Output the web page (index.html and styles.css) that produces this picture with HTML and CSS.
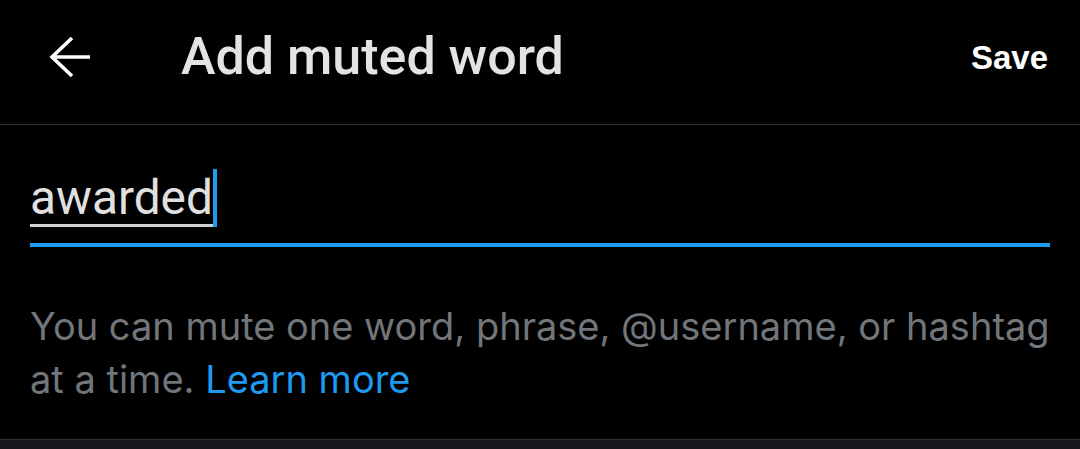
FILE: index.html
```html
<!DOCTYPE html>
<html>
<head>
<meta charset="utf-8">
<link rel="stylesheet" href="styles.css">
</head>
<body>
<div class="screen">
  <header class="topbar">
    <svg class="back" viewBox="0 0 48 48" width="48" height="48" aria-hidden="true">
      <path d="M28 5 L8 24 L28 43 M8 24 H46" fill="none" stroke="#ffffff" stroke-width="3.6" stroke-linecap="butt" stroke-linejoin="miter"/>
    </svg>
    <h1 class="title">Add muted word</h1>
    <span class="save">Save</span>
  </header>
  <section class="field">
    <div class="input-row">
      <span class="typed">awarded</span><span class="caret"></span>
    </div>
    <div class="focus-line"></div>
  </section>
  <p class="help">You can mute one word, phrase, @username, or hashtag at a time. <span class="link">Learn more</span></p>
  <div class="spacer"></div>
  <div class="bottom-band"></div>
</div>
</body>
</html>
```
FILE: styles.css
```css
html, body {
  margin: 0;
  padding: 0;
  background: #000000;
}
.screen {
  width: 1080px;
  height: 449px;
  overflow: hidden;
  display: flex;
  flex-direction: column;
  background: #000000;
}
.topbar {
  flex: none;
  display: flex;
  align-items: center;
  padding: 0 32px 10px 44px;
  box-sizing: border-box;
  border-bottom: 1px solid #2f3336;
  height: 125px;
}
.back {
  flex: none;
  display: block;
}
.title {
  margin: 0 0 0 89px;
  font-family: Roboto, "Liberation Sans", sans-serif;
  font-weight: 500;
  font-size: 52px;
  color: #e3e3e3;
  flex: 1;
  line-height: 1;
}
.save {
  font-family: "Liberation Sans", Arial, sans-serif;
  font-weight: 700;
  font-size: 33px;
  color: #ffffff;
  line-height: 1;
}
.field {
  flex: none;
  padding: 44px 30px 0 30px;
}
.input-row {
  display: flex;
  align-items: flex-end;
  height: 58px;
}
.typed {
  font-family: Roboto, "Liberation Sans", sans-serif;
  font-size: 47.8px;
  color: #e0e0e0;
  line-height: 1;
  border-bottom: 3px solid #cfcfcf;
  padding-bottom: 1px;
}
.caret {
  width: 4px;
  height: 58px;
  background: #1d9bf0;
}
.focus-line {
  margin-top: 16px;
  height: 4px;
  background: #1d9bf0;
}
.help {
  margin: 53px 30px 0 30px;
  font-family: Inter, "Noto Sans", sans-serif;
  font-size: 38px;
  line-height: 53px;
  color: #71767b;
}
.link {
  color: #1d9bf0;
}
.spacer {
  flex: 1;
}
.bottom-band {
  flex: none;
  height: 9px;
  background: #16181c;
  border-top: 1px solid #2f3336;
}
```
